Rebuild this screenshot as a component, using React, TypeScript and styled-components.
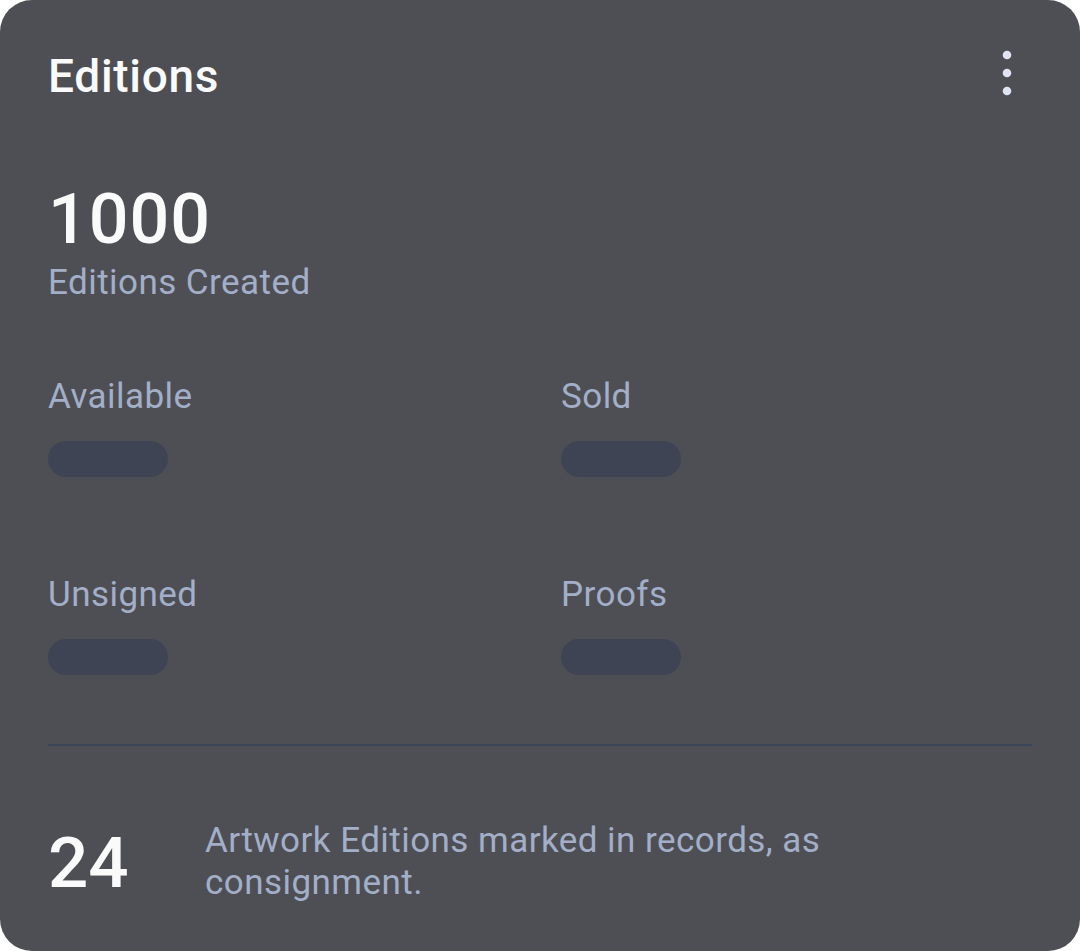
import React from "react";
import styled, { createGlobalStyle } from "styled-components";

const GlobalStyle = createGlobalStyle`
  html, body {
    margin: 0;
    padding: 0;
    background: #ffffff;
  }
  * { box-sizing: border-box; }
`;

const Card = styled.section`
  width: 1080px;
  height: 951px;
  background: #4e4f55;
  border-radius: 32px;
  padding: 49px 48px 47px 48px;
  display: flex;
  flex-direction: column;
  font-family: Roboto, "Noto Sans", sans-serif;
  overflow: hidden;
`;

const Header = styled.header`
  display: flex;
  justify-content: space-between;
  align-items: flex-start;
`;

const Title = styled.h1`
  margin: 0;
  font-size: 46px;
  line-height: 54px;
  font-weight: 500;
  letter-spacing: 0.7px;
  color: #fafafa;
`;

const MenuButton = styled.button`
  width: 50px;
  height: 48px;
  border: none;
  background: transparent;
  padding: 0;
  display: flex;
  align-items: center;
  justify-content: center;
  cursor: pointer;
`;

const BigStat = styled.div`
  margin-top: 81px;
  display: flex;
  flex-direction: column;
`;

const BigNumber = styled.div<{ $size?: number; $spacing?: number }>`
  font-size: ${(p) => p.$size ?? 70}px;
  line-height: ${(p) => p.$size ?? 70}px;
  letter-spacing: ${(p) => p.$spacing ?? 1}px;
  font-weight: 500;
  color: #fafafa;
`;

const Caption = styled.div`
  margin-top: 8px;
  font-size: 35px;
  line-height: 42px;
  letter-spacing: 0.45px;
  color: #a3aec7;
`;

const StatGrid = styled.div`
  margin-top: 72px;
  display: grid;
  grid-template-columns: 1fr 1fr;
  column-gap: 42px;
  row-gap: 97px;
`;

const Stat = styled.div`
  display: flex;
  flex-direction: column;
  align-items: flex-start;
`;

const Label = styled.div`
  font-size: 35px;
  line-height: 42px;
  letter-spacing: 0.45px;
  color: #a3aec7;
`;

const Placeholder = styled.div`
  margin-top: 23px;
  width: 120px;
  height: 36px;
  border-radius: 18px;
  background: #3e4453;
`;

const Divider = styled.hr`
  margin: 69px 0 0 0;
  border: none;
  height: 2px;
  background: #3a4357;
`;

const Footer = styled.div`
  margin-top: 74px;
  display: grid;
  grid-template-columns: 157px 1fr;
  align-items: center;
`;

const FooterText = styled.p`
  margin: 0;
  max-width: 720px;
  font-size: 35px;
  line-height: 42px;
  letter-spacing: 0.45px;
  color: #a3aec7;
`;

const DotsIcon = () => (
  <svg width="10" height="46" viewBox="0 0 10 46" aria-hidden="true">
    <circle cx="5" cy="5" r="4.3" fill="#dee4f1" />
    <circle cx="5" cy="23" r="4.3" fill="#dee4f1" />
    <circle cx="5" cy="41" r="4.3" fill="#dee4f1" />
  </svg>
);

const stats = ["Available", "Sold", "Unsigned", "Proofs"];

export default function App() {
  return (
    <>
      <GlobalStyle />
      <Card>
        <Header>
          <Title>Editions</Title>
          <MenuButton aria-label="More options">
            <DotsIcon />
          </MenuButton>
        </Header>
        <BigStat>
          <BigNumber>1000</BigNumber>
          <Caption>Editions Created</Caption>
        </BigStat>
        <StatGrid>
          {stats.map((s) => (
            <Stat key={s}>
              <Label>{s}</Label>
              <Placeholder />
            </Stat>
          ))}
        </StatGrid>
        <Divider />
        <Footer>
          <BigNumber $size={71} $spacing={0}>24</BigNumber>
          <FooterText>Artwork Editions marked in records, as consignment.</FooterText>
        </Footer>
      </Card>
    </>
  );
}
